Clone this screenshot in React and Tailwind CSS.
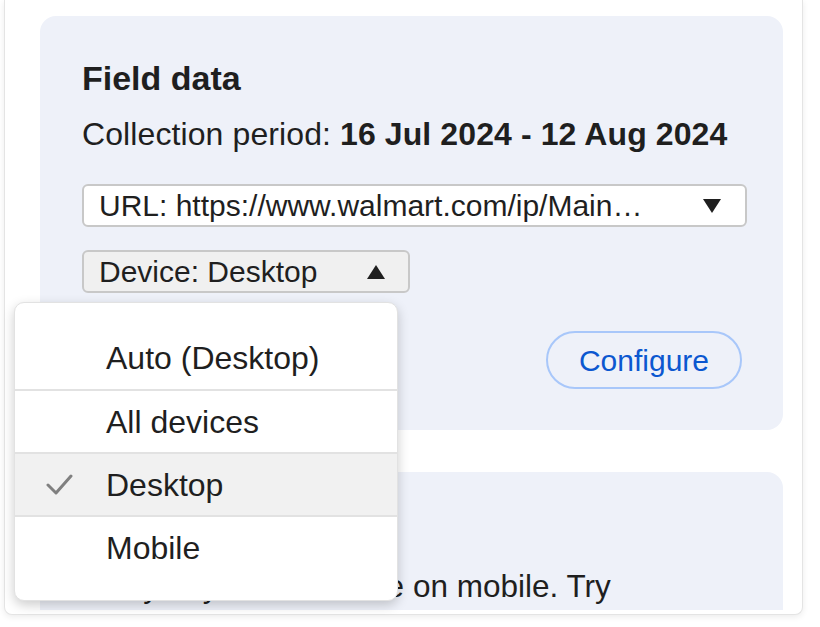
import React from "react";

function Triangle({ up = false }) {
  return (
    <svg width="18" height="14" viewBox="0 0 18 14" className="shrink-0">
      {up ? (
        <polygon points="0,14 18,14 9,0" fill="#1f1f1f" />
      ) : (
        <polygon points="0,0 18,0 9,14" fill="#1f1f1f" />
      )}
    </svg>
  );
}

function Check() {
  return (
    <svg width="28" height="24" viewBox="0 0 28 24" className="shrink-0">
      <polyline
        points="2,12 10,20 25,3"
        fill="none"
        stroke="#808080"
        strokeWidth="3"
        strokeLinecap="round"
        strokeLinejoin="round"
      />
    </svg>
  );
}

const items = ["Auto (Desktop)", "All devices", "Desktop", "Mobile"];

export default function App() {
  return (
    <div className="relative w-[820px] h-[627px] overflow-hidden bg-white text-[#1f1f1f] font-['Liberation_Sans',Arial,sans-serif]">
      <div className="ml-[4px] w-[799px] h-[615px] overflow-hidden rounded-b-[8px] border border-t-0 border-[#e4e4e4] bg-white shadow-[0_2px_6px_rgba(0,0,0,0.08)]">
        <div className="h-[610px] overflow-hidden pl-[35px] pr-[19px] pt-[16px]">
          <section className="h-[414px] rounded-[16px] bg-[#eef1f9] pl-[42px] pr-[36px] pt-[42px]">
            <h2 className="text-[34px] leading-[40px] font-bold">Field data</h2>
            <p className="mt-[16px] text-[32px] leading-[40px] tracking-[0.1px]">
              Collection period: <span className="font-bold">16 Jul 2024 - 12 Aug 2024</span>
            </p>
            <div className="mt-[30px] flex h-[43px] w-full items-center rounded-[6px] border-2 border-[#c8c8c8] bg-white pl-[15px] pr-[24px]">
              <span className="whitespace-nowrap text-[30px] leading-none">
                URL: https://www.walmart.com/ip/Main…
              </span>
              <span className="ml-auto">
                <Triangle />
              </span>
            </div>
            <div className="mt-[23px] flex h-[43px] w-[328px] items-center rounded-[6px] border-2 border-[#c8c8c8] bg-[#f0f0f0] pl-[15px] pr-[23px]">
              <span className="whitespace-nowrap text-[30px] leading-none">Device: Desktop</span>
              <span className="ml-auto">
                <Triangle up />
              </span>
            </div>
            <div className="mt-[38px] flex justify-end pr-[5px]">
              <button className="flex h-[58px] w-[196px] items-center justify-center rounded-full border-2 border-[#a8c7fa] text-[30px] text-[#0b57d0]">
                Configure
              </button>
            </div>
          </section>
          <section className="mt-[42px] h-[300px] rounded-[16px] bg-[#eef1f9] pl-[42px] pr-[36px] pt-[42px]">
            <h2 className="text-[34px] leading-[40px] font-bold">Settings</h2>
            <p className="mt-[12px] w-[560px] text-[31.5px] leading-[40px]">
              Many of your users are on mobile. Try emulating a mobile device with the device toolbar.
            </p>
          </section>
        </div>
      </div>

      <div className="absolute left-[14px] top-[302px] w-[384px] rounded-[10px] border border-[#e2e2e2] bg-white pt-[23px] pb-[22px] shadow-[0_4px_12px_rgba(0,0,0,0.2)]">
        {items.map((label, i) => (
          <div
            key={label}
            className={
              i === 0
                ? "flex h-[63px] items-center"
                : i === 2
                ? "flex h-[63px] items-center border-t-2 border-[#e2e2e2] bg-[#f1f1f1]"
                : "flex h-[63px] items-center border-t-2 border-[#e2e2e2]"
            }
          >
            <div className="flex w-[91px] justify-end pr-[32px]">{i === 2 ? <Check /> : null}</div>
            <span className="whitespace-nowrap text-[32px] leading-none">{label}</span>
          </div>
        ))}
      </div>
    </div>
  );
}
